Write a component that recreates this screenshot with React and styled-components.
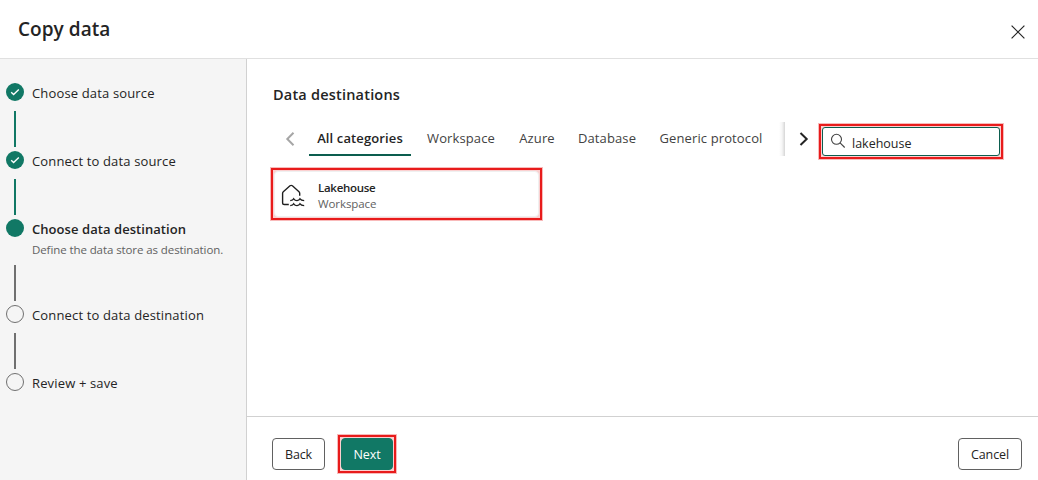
import React from "react";
import styled, { createGlobalStyle, css } from "styled-components";

const GlobalStyle = createGlobalStyle`
  *, *::before, *::after { box-sizing: border-box; }
  body {
    margin: 0;
    background: #fff;
    color: #242424;
    font-family: "Open Sans", "Noto Sans", sans-serif;
    font-size: 13px;
  }
`;

const Page = styled.div`
  display: flex;
  flex-direction: column;
  width: 1038px;
  height: 480px;
  overflow: hidden;
`;

const Header = styled.header`
  display: flex;
  flex: none;
  justify-content: space-between;
  height: 59px;
  padding: 15px 13px 0 18px;
  border-bottom: 1px solid #e0e0e0;
`;

const Title = styled.h1`
  margin: 0;
  font-size: 19px;
  font-weight: 600;
  line-height: 28px;
  letter-spacing: 0.05px;
`;

const CloseButton = styled.button`
  display: block;
  width: 14px;
  height: 14px;
  margin-top: 10px;
  padding: 0;
  border: 0;
  background: none;
  svg { display: block; }
`;

const Body = styled.div`
  display: flex;
  flex: 1;
  min-height: 0;
`;

const Sidebar = styled.nav`
  flex: none;
  width: 247px;
  padding: 24px 0 0 6px;
  background: #f5f5f5;
  border-right: 1px solid #d1d1d1;
`;

const Step = styled.div`
  display: flex;
  gap: 8px;
  height: ${(p) => (p.$tall ? 86 : 68)}px;
`;

const Rail = styled.div`
  display: flex;
  flex-direction: column;
  align-items: center;
  justify-content: space-between;
  width: 18px;
  padding-bottom: 4px;
`;

const Marker = styled.span`
  display: flex;
  align-items: center;
  justify-content: center;
  width: 18px;
  height: 18px;
  border-radius: 50%;
  ${(p) =>
    p.$state === "todo"
      ? css`border: 1px solid #707070;`
      : css`background: #117865;`}
`;

const Connector = styled.span`
  width: 2px;
  height: 36px;
  background: ${(p) => (p.$state === "done" ? "#117865" : "#707070")};
`;

const StepLabel = styled.div`
  line-height: 20px;
  white-space: nowrap;
  font-weight: ${(p) => (p.$current ? 600 : 400)};
  letter-spacing: ${(p) => (p.$current ? 0.06 : 0.15)}px;
`;

const StepHint = styled.div`
  margin-top: 3px;
  color: #616161;
  font-size: 11.5px;
  line-height: 16px;
  letter-spacing: -0.09px;
  white-space: nowrap;
`;

const Main = styled.main`
  display: flex;
  flex: 1;
  flex-direction: column;
  min-width: 0;
`;

const Content = styled.section`
  flex: 1;
  padding: 25px 0 0 24px;
`;

const SectionTitle = styled.h2`
  margin: 0 0 0 2px;
  font-size: 14.5px;
  font-weight: 600;
  line-height: 22px;
  letter-spacing: 0.2px;
`;

const Toolbar = styled.div`
  display: flex;
  height: 35px;
  margin-top: 18px;
`;

const Arrow = styled.button`
  display: block;
  flex: none;
  width: 10px;
  height: 16px;
  margin: ${(p) => p.$margin};
  padding: 0;
  border: 0;
  background: none;
  svg { display: block; }
`;

const TabList = styled.div`
  display: flex;
  flex: none;
  width: 476px;
  height: 32px;
`;

const Tab = styled.button`
  flex: none;
  width: ${(p) => p.$width}px;
  height: 32px;
  padding: 0 0 2px;
  border: 0;
  border-bottom: 2px solid ${(p) => (p.$active ? "#0c5e4f" : "transparent")};
  background: none;
  color: ${(p) => (p.$active ? "#242424" : "#424242")};
  font: ${(p) => (p.$active ? 600 : 400)} 13px/26px "Open Sans", "Noto Sans", sans-serif;
  letter-spacing: 0.12px;
  white-space: nowrap;
`;

const ScrollShade = styled.div`
  width: 6px;
  height: 34px;
  margin: -2px 0 0 -6px;
  background: linear-gradient(to right, rgba(0, 0, 0, 0), rgba(0, 0, 0, 0.04) 50%, rgba(0, 0, 0, 0.16));
`;

const Callout = styled.div`
  width: ${(p) => p.$width}px;
  height: ${(p) => p.$height}px;
  padding: 1px;
  border: 2px solid #e81b1b;
  outline: 1px solid rgba(232, 27, 27, 0.3);
  background: #fbd0d0;
`;

const SearchBox = styled.label`
  display: flex;
  align-items: center;
  width: 100%;
  height: 100%;
  padding-left: 7px;
  border: 1px solid #0c5e4f;
  border-radius: 3px;
  background: #fff;
  svg { display: block; flex: none; margin-top: -2px; }
`;

const SearchInput = styled.input`
  width: 130px;
  margin: 4px 0 0 6px;
  padding: 0;
  border: 0;
  outline: 0;
  background: transparent;
  color: #242424;
  font: 12.5px/20px "Open Sans", "Noto Sans", sans-serif;
`;

const CardSlot = styled.div`
  margin-top: 9px;
`;

const Card = styled.div`
  display: flex;
  align-items: center;
  height: 100%;
  padding: 3px 0 0 6px;
  border: 1px solid #f0f0f0;
  border-radius: 4px;
  background: #fff;
  svg { display: block; flex: none; }
`;

const CardText = styled.div`
  margin: 0 0 0 13px;
  font-size: 11.5px;
  line-height: 16px;
`;

const CardName = styled.div`
  font-weight: 600;
  letter-spacing: -0.28px;
`;

const CardKind = styled.div`
  color: #616161;
  letter-spacing: -0.1px;
`;

const Footer = styled.footer`
  display: flex;
  flex: none;
  align-items: flex-start;
  height: 64px;
  padding: 21px 16px 0 25px;
  border-top: 1px solid #d1d1d1;
`;

const Button = styled.button`
  display: block;
  width: ${(p) => p.$width}px;
  height: 32px;
  margin: ${(p) => p.$margin || 0};
  padding: 2px 0 0;
  border: 1px solid ${(p) => (p.$primary ? "#117865" : "#616161")};
  border-radius: 4px;
  background: ${(p) => (p.$primary ? "#117865" : "#fff")};
  color: ${(p) => (p.$primary ? "#fff" : "#242424")};
  font: ${(p) => (p.$primary ? 500 : 400)} 12.5px/28px "Open Sans", "Noto Sans", sans-serif;
  letter-spacing: -0.1px;
`;

const NextSlot = styled.div`
  margin: -3px 0 0 13px;
`;

const CheckIcon = () => (
  <svg width="10" height="8" viewBox="0 0 10 8" fill="none" stroke="#fff" strokeWidth="1.4">
    <path d="M1.2 4.3 3.6 6.5 8.8 1.6" />
  </svg>
);

const CloseIcon = () => (
  <svg width="14" height="14" viewBox="0 0 14 14" stroke="#242424" strokeWidth="1.2">
    <path d="M.6.6 13.4 13.4M13.4.6.6 13.4" />
  </svg>
);

const ChevronIcon = ({ right }) => (
  <svg width="10" height="16" viewBox="0 0 10 16" fill="none" stroke={right ? "#242424" : "#a6a6a6"} strokeWidth="2">
    <path d={right ? "M1.5 2 7.7 8 1.5 14" : "M8.5 1.7 2.3 8 8.5 14.3"} />
  </svg>
);

const SearchIcon = () => (
  <svg width="16" height="16" viewBox="0 0 16 16" fill="none" stroke="#424242" strokeWidth="1.1">
    <circle cx="6.5" cy="6.3" r="5" />
    <path d="M10.1 9.9 14.7 14.5" />
  </svg>
);

const LakehouseIcon = () => (
  <svg width="24" height="24" viewBox="0 0 24 24" fill="none" stroke="#1f1f1f" strokeWidth="1.4">
    <path d="M7.8 20.5H3.4Q1.6 20.5 1.6 18.7V9.2Q1.6 8.3 2.3 7.7L9 1.8Q10.2.9 11.4 1.8L18 7.7Q18.7 8.3 18.7 9.2V11.8" />
    <path d="M9.2 16.6Q12 16.4 12.7 14.8Q14 16.6 16 16.6Q18.2 16.4 19 14.8Q20.2 16.6 23.2 16.6" />
    <path d="M9.2 21.6Q12 21.4 12.7 19.8Q14 21.6 16 21.6Q18.2 21.4 19 19.8Q20.2 21.6 23.2 21.6" />
  </svg>
);

const steps = [
  { label: "Choose data source", state: "done" },
  { label: "Connect to data source", state: "done" },
  { label: "Choose data destination", state: "current", hint: "Define the data store as destination." },
  { label: "Connect to data destination", state: "todo" },
  { label: "Review + save", state: "todo" },
];

const tabs = [
  { label: "All categories", width: 102, active: true },
  { label: "Workspace", width: 100 },
  { label: "Azure", width: 52 },
  { label: "Database", width: 88 },
  { label: "Generic protocol", width: 120 },
];

export default function App() {
  return (
    <Page>
      <GlobalStyle />
      <Header>
        <Title>Copy data</Title>
        <CloseButton aria-label="Close"><CloseIcon /></CloseButton>
      </Header>
      <Body>
        <Sidebar>
          {steps.map((s, i) => (
            <Step key={s.label} $tall={Boolean(s.hint)}>
              <Rail>
                <Marker $state={s.state}>{s.state === "done" && <CheckIcon />}</Marker>
                {i < steps.length - 1 && <Connector $state={s.state} />}
              </Rail>
              <div>
                <StepLabel $current={s.state === "current"}>{s.label}</StepLabel>
                {s.hint && <StepHint>{s.hint}</StepHint>}
              </div>
            </Step>
          ))}
        </Sidebar>
        <Main>
          <Content>
            <SectionTitle>Data destinations</SectionTitle>
            <Toolbar>
              <Arrow $margin="7px 14px 0 14px" aria-label="Previous"><ChevronIcon /></Arrow>
              <TabList>
                {tabs.map((t) => (
                  <Tab key={t.label} $width={t.width} $active={t.active}>{t.label}</Tab>
                ))}
              </TabList>
              <ScrollShade />
              <Arrow $margin="7px 10px 0 14px" aria-label="Next categories"><ChevronIcon right /></Arrow>
              <Callout $width={184} $height={35}>
                <SearchBox>
                  <SearchIcon />
                  <SearchInput defaultValue="lakehouse" />
                </SearchBox>
              </Callout>
            </Toolbar>
            <CardSlot>
              <Callout $width={271} $height={52}>
                <Card>
                  <LakehouseIcon />
                  <CardText>
                    <CardName>Lakehouse</CardName>
                    <CardKind>Workspace</CardKind>
                  </CardText>
                </Card>
              </Callout>
            </CardSlot>
          </Content>
          <Footer>
            <Button $width={53}>Back</Button>
            <NextSlot>
              <Callout $width={58} $height={38}>
                <Button $width={52} $primary>Next</Button>
              </Callout>
            </NextSlot>
            <Button $width={64} $margin="0 0 0 auto">Cancel</Button>
          </Footer>
        </Main>
      </Body>
    </Page>
  );
}
